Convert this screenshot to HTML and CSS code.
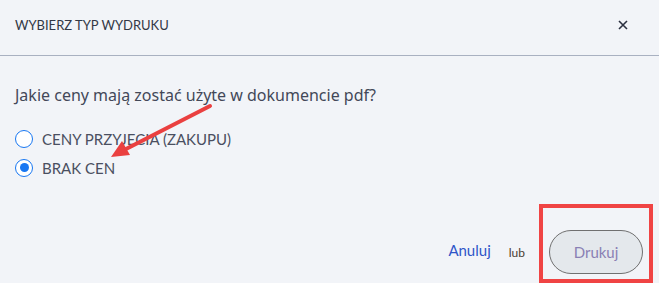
FILE: index.html
```html
<!DOCTYPE html>
<html lang="pl">
<head>
  <meta charset="UTF-8" />
  <title>Wybierz typ wydruku</title>
  <link rel="stylesheet" href="styles.css">
</head>
<body>
  <div class="modal">
    <header class="modal-header">
      <h2>WYBIERZ TYP WYDRUKU</h2>
      <button class="close" title="Zamknij">
        <svg width="10" height="10" viewBox="0 0 10 10">
          <path d="M1 1L9 9M9 1L1 9" stroke="#2b3040" stroke-width="1.6" fill="none"/>
        </svg>
      </button>
    </header>

    <div class="modal-body">
      <p class="question">Jakie ceny mają zostać użyte w dokumencie pdf?</p>
      <label class="option">
        <input type="radio" name="ceny" />
        <span class="dot"></span>
        CENY PRZYJECIA (ZAKUPU)
      </label>
      <label class="option">
        <input type="radio" name="ceny" checked />
        <span class="dot"></span>
        BRAK CEN
      </label>
    </div>

    <footer class="modal-footer">
      <a href="#" class="cancel">Anuluj</a>
      <span class="or">lub</span>
      <button class="print">Drukuj</button>
    </footer>

    <!-- annotations -->
    <svg class="arrow" width="659" height="283" viewBox="0 0 659 283">
      <line x1="210" y1="106" x2="126" y2="149" stroke="#ea4040" stroke-width="4" stroke-linecap="round"/>
      <polygon points="111,157 122,141 130,155" fill="#ea4040"/>
    </svg>
    <div class="highlight"></div>
  </div>
</body>
</html>
```

FILE: styles.css
```css
* {
  box-sizing: border-box;
}

body {
  margin: 0;
  font-family: 'Lato', 'Noto Sans', sans-serif;
  background-color: #f2f4f8;
  color: #3e4352;
  overflow: hidden;
}

.modal {
  position: relative;
  width: 659px;
  height: 283px;
}

.modal-header {
  height: 56px;
  padding: 0 15px;
  display: flex;
  justify-content: space-between;
  align-items: center;
  border-bottom: 1px solid #a9b1c1;
}

.modal-header h2 {
  margin: 0 0 6px;
  font-size: 13px;
  font-weight: 400;
  color: #333846;
}

.close {
  border: none;
  background: none;
  padding: 0;
  margin: 0 16px 6px 0;
  cursor: pointer;
  display: flex;
}

.modal-body {
  padding: 28px 15px 0;
}

.question {
  margin: 0 0 18px;
  font-family: 'Noto Sans', sans-serif;
  font-size: 16px;
  color: #434858;
}

.option {
  display: flex;
  align-items: center;
  gap: 9px;
  height: 29px;
  font-size: 15px;
  color: #4a4f60;
  cursor: pointer;
}

.option input {
  display: none;
}

.dot {
  width: 18px;
  height: 18px;
  border-radius: 50%;
  border: 1.5px solid #1877f2;
  background-color: #fff;
  display: flex;
  align-items: center;
  justify-content: center;
}

.option input:checked + .dot::after {
  content: "";
  width: 9px;
  height: 9px;
  border-radius: 50%;
  background-color: #1877f2;
}

.modal-footer {
  position: absolute;
  right: 16px;
  bottom: 9px;
  display: flex;
  align-items: center;
}

.cancel {
  color: #2f55c8;
  text-decoration: none;
  font-size: 15px;
  margin: 0 18px 4px 0;
}

.or {
  font-size: 12px;
  color: #4a3c33;
  margin: 0 24px 0 0;
}

.print {
  width: 94px;
  height: 44px;
  border-radius: 22px;
  border: 1px solid #707070;
  background-color: #e4e8ec;
  color: #8a80b4;
  font-family: inherit;
  font-size: 15px;
  cursor: pointer;
}

.arrow {
  position: absolute;
  left: 0;
  top: 0;
  pointer-events: none;
}

.highlight {
  position: absolute;
  left: 539px;
  top: 204px;
  width: 114px;
  height: 79px;
  border: 4px solid #f04444;
  pointer-events: none;
}
```
